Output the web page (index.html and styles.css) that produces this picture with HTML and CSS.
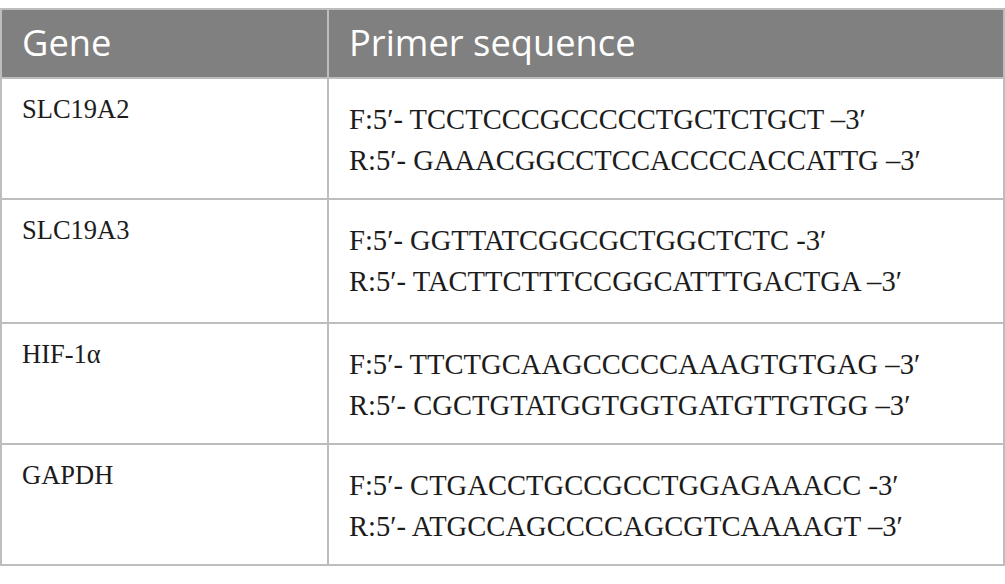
FILE: index.html
```html
<!DOCTYPE html>
<html lang="en">
<head>
<meta charset="utf-8">
<title>Primer sequences</title>
<link rel="stylesheet" href="styles.css">
</head>
<body>
<table class="primers">
  <thead>
    <tr><th class="col-gene">Gene</th><th class="col-seq">Primer sequence</th></tr>
  </thead>
  <tbody>
    <tr>
      <td class="gene">SLC19A2</td>
      <td class="seq"><div class="line">F:5′- TCCTCCCGCCCCCTGCTCTGCT –3′</div><div class="line">R:5′- GAAACGGCCTCCACCCCACCATTG –3′</div></td>
    </tr>
    <tr class="tall">
      <td class="gene">SLC19A3</td>
      <td class="seq"><div class="line">F:5′- GGTTATCGGCGCTGGCTCTC -3′</div><div class="line">R:5′- TACTTCTTTCCGGCATTTGACTGA –3′</div></td>
    </tr>
    <tr>
      <td class="gene">HIF-1α</td>
      <td class="seq"><div class="line">F:5′- TTCTGCAAGCCCCCAAAGTGTGAG –3′</div><div class="line">R:5′- CGCTGTATGGTGGTGATGTTGTGG –3′</div></td>
    </tr>
    <tr>
      <td class="gene">GAPDH</td>
      <td class="seq"><div class="line">F:5′- CTGACCTGCCGCCTGGAGAAACC -3′</div><div class="line">R:5′- ATGCCAGCCCCAGCGTCAAAAGT –3′</div></td>
    </tr>
  </tbody>
</table>
</body>
</html>
```
FILE: styles.css
```css
html, body {
  margin: 0;
  padding: 0;
  background: #ffffff;
}
body {
  padding-top: 8px;
}
.primers {
  width: 1005px;
  border-collapse: collapse;
  table-layout: fixed;
}
.primers th,
.primers td {
  border: 2px solid #bdbdbd;
  vertical-align: top;
  text-align: left;
}
.primers th {
  background: #808080;
  color: #ffffff;
  font-family: "Open Sans", "Liberation Sans", sans-serif;
  font-weight: 400;
  font-size: 36.3px;
  line-height: 40px;
  height: 69px;
  box-sizing: border-box;
  padding: 12px 20px 0 20px;
  vertical-align: top;
}
.col-gene { width: 327px; }
.primers td {
  font-family: "Liberation Serif", "Times New Roman", serif;
  color: #1c1c1c;
  height: 121px;
  box-sizing: border-box;
}
.primers .tall td {
  height: 124px;
}
.gene {
  font-size: 26.5px;
  padding: 14px 20px 0 20px;
  line-height: 32px;
}
.seq {
  font-size: 28.6px;
  padding: 20px 20px 0 20px;
}
.line {
  line-height: 41px;
  white-space: nowrap;
}
```
